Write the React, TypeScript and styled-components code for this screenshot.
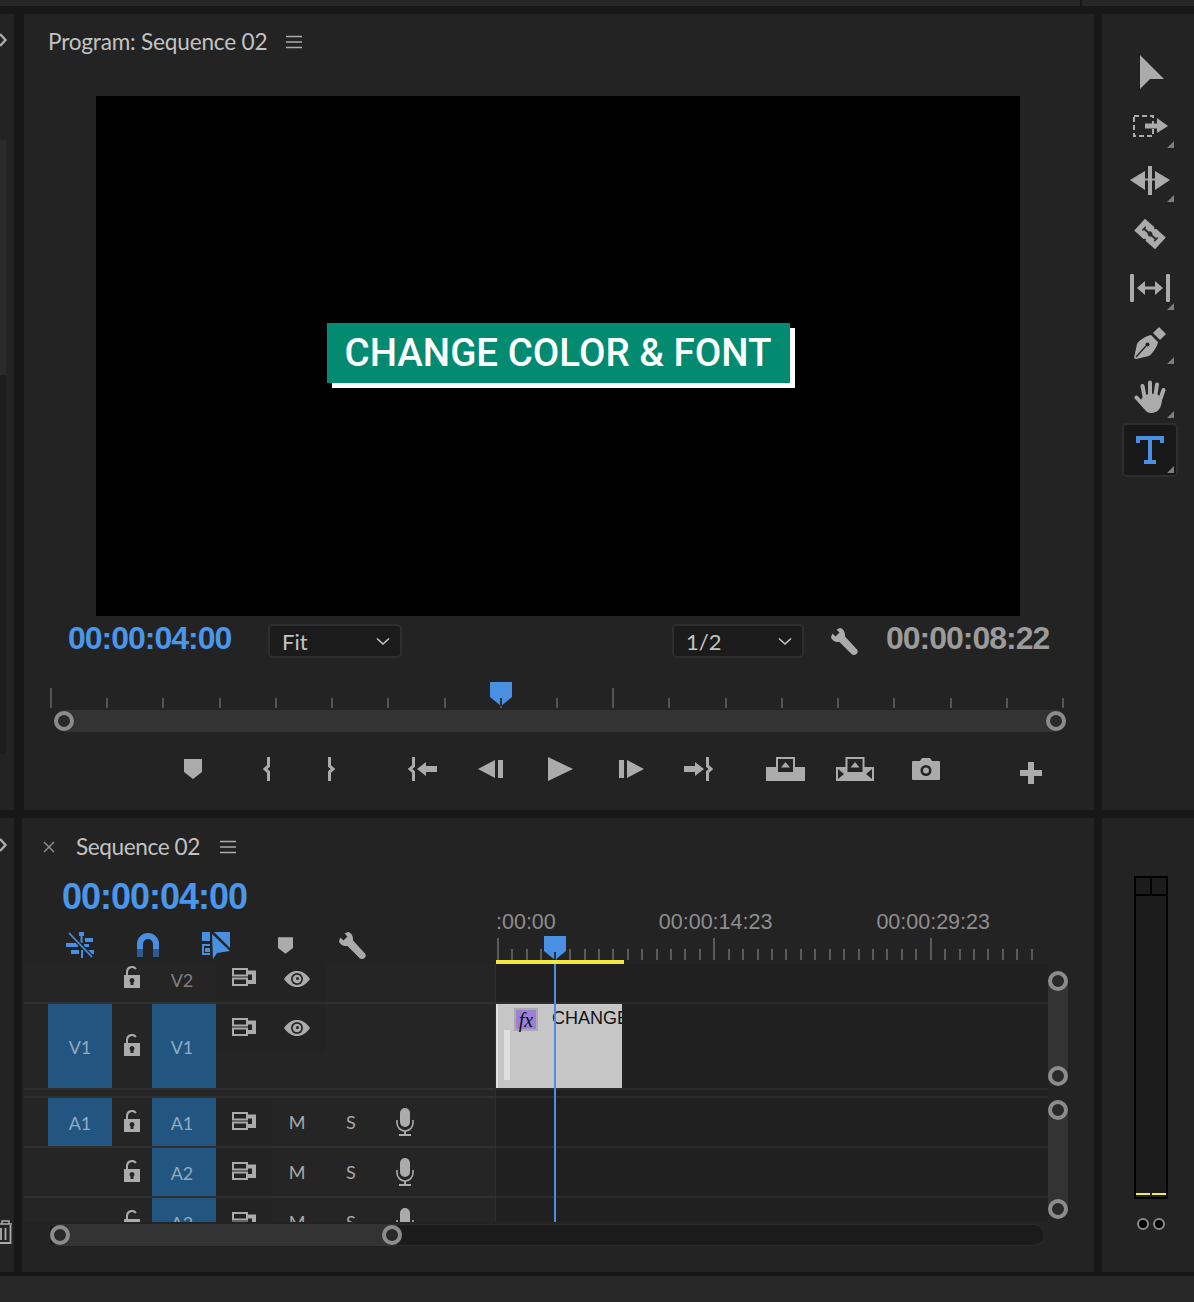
import styled, { createGlobalStyle } from 'styled-components'

const GRAY = '#ababab'
const BLUE = '#4a90e2'
const TIME_BLUE = '#4a96ea'
const PANEL = '#232323'

const GlobalStyle = createGlobalStyle`
  html, body {
    margin: 0;
    padding: 0;
    background: #171717;
  }
  * {
    box-sizing: border-box;
  }
  svg {
    display: block;
    flex-shrink: 0;
  }
`

const Page = styled.div`
  width: 1194px;
  height: 1302px;
  overflow: hidden;
  display: flex;
  flex-direction: column;
  background: #171717;
  font-family: Lato, 'Liberation Sans', sans-serif;
`

const TopBar = styled.div`
  height: 6px;
  display: flex;
  gap: 2px;
  flex-shrink: 0;
`

const TopBarPart = styled.div<{ $w: number }>`
  width: ${p => p.$w}px;
  background: #262626;
`

const PanelRow = styled.div<{ $h: number; $top: number }>`
  display: flex;
  height: ${p => p.$h}px;
  margin-top: ${p => p.$top}px;
  flex-shrink: 0;
`

const Sliver = styled.div`
  width: 14px;
  background: ${PANEL};
  display: flex;
  flex-direction: column;
  overflow: hidden;
`

const SliverChevron = styled.div<{ $top: number }>`
  margin-top: ${p => p.$top}px;
`

const SliverStrip = styled.div<{ $h: number; $bg: string; $top?: number }>`
  width: 6px;
  height: ${p => p.$h}px;
  margin-top: ${p => p.$top ?? 0}px;
  background: ${p => p.$bg};
`

const SliverTrash = styled.div`
  margin-top: auto;
  margin-bottom: 28px;
`

const Monitor = styled.section`
  width: 1070px;
  margin-left: 10px;
  background: ${PANEL};
  display: flex;
  flex-direction: column;
`

const PanelHeader = styled.header<{ $h: number; $left: number }>`
  height: ${p => p.$h}px;
  padding-left: ${p => p.$left}px;
  display: flex;
  align-items: center;
  flex-shrink: 0;
`

const PanelTitle = styled.h2<{ $gap: number; $track: number }>`
  margin: -2px ${p => p.$gap}px 0 0;
  font-size: 22.6px;
  font-weight: 400;
  letter-spacing: ${p => p.$track}px;
  color: #c2c2c2;
`

const Video = styled.div`
  width: 924px;
  height: 520px;
  margin: 26px 0 0 72px;
  background: #000;
  display: flex;
  align-items: center;
  justify-content: center;
  flex-shrink: 0;
`

const Caption = styled.div`
  width: 463px;
  height: 60px;
  margin-bottom: 6px;
  background: #038b71;
  box-shadow: 5px 5px 0 #fff;
  color: #fff;
  font-family: Roboto, sans-serif;
  font-size: 38.5px;
  font-weight: 500;
  line-height: 60px;
  text-align: center;
  white-space: nowrap;
`

const ControlRow = styled.div`
  height: 34px;
  margin-top: 8px;
  padding-left: 44px;
  display: flex;
  align-items: center;
  flex-shrink: 0;
`

const Timecode = styled.div<{ $size: number; $color: string; $w?: number; $left?: number }>`
  width: ${p => (p.$w ? `${p.$w}px` : 'auto')};
  margin-left: ${p => p.$left ?? 0}px;
  font-family: 'Liberation Sans', Arial, sans-serif;
  font-size: ${p => p.$size}px;
  font-weight: 700;
  line-height: ${p => p.$size}px;
  letter-spacing: -1px;
  color: ${p => p.$color};
  white-space: nowrap;
  position: relative;
  top: -3px;
`

const Dropdown = styled.div<{ $left?: number; $w: number }>`
  width: ${p => p.$w}px;
  height: 34px;
  margin-left: ${p => p.$left ?? 0}px;
  padding: 0 10px 0 12px;
  display: flex;
  align-items: center;
  justify-content: space-between;
  background: #1b1b1b;
  border: 2px solid #2e2e2e;
  border-radius: 5px;
  color: #c4c4c4;
  font-size: 22px;
`

const WrenchSlot = styled.div`
  margin-left: 26px;
`

const Ruler = styled.div`
  position: relative;
  width: 1014px;
  height: 24px;
  margin: 26px 0 0 26px;
  display: flex;
  justify-content: space-between;
  align-items: flex-end;
  flex-shrink: 0;
`

const Tick = styled.span<{ $tall: boolean; $h: number; $color: string }>`
  width: 2px;
  height: ${p => (p.$tall ? p.$h * 2 : p.$h)}px;
  background: ${p => p.$color};
`

const PlayheadMark = styled.div<{ $left: number; $top: number }>`
  position: absolute;
  left: ${p => p.$left}px;
  top: ${p => p.$top}px;
`

const Slider = styled.div`
  width: 1012px;
  height: 22px;
  margin: 2px 0 0 30px;
  border-radius: 11px;
  background: #333;
  display: flex;
  justify-content: space-between;
  align-items: center;
  flex-shrink: 0;
`

const Handle = styled.span`
  width: 20px;
  height: 20px;
  border-radius: 50%;
  border: 4px solid #8c8c8c;
  background: #2a2a2a;
  flex-shrink: 0;
`

const Transport = styled.div`
  height: 26px;
  margin-top: 24px;
  padding-left: 160px;
  display: flex;
  align-items: center;
`

const TransportButton = styled.button<{ $left?: number; $down?: number }>`
  margin: ${p => p.$down ?? 0}px 0 0 ${p => p.$left ?? 0}px;
  padding: 0;
  border: 0;
  background: none;
  display: flex;
`

const ToolsPanel = styled.aside`
  width: 92px;
  margin-left: 8px;
  padding: 31px 0 0 20px;
  background: ${PANEL};
  display: flex;
  flex-direction: column;
`

const ToolSlot = styled.div<{ $active?: boolean }>`
  position: relative;
  width: 56px;
  height: 54px;
  display: flex;
  align-items: center;
  justify-content: center;
  border-radius: 5px;
  background: ${p => (p.$active ? '#181818' : 'transparent')};
  border: ${p => (p.$active ? '2px solid #2e2e2e' : '0')};
`

const Corner = styled.span<{ $active?: boolean }>`
  position: absolute;
  right: ${p => (p.$active ? 2 : 4)}px;
  bottom: ${p => (p.$active ? 2 : 5)}px;
  width: 7px;
  height: 7px;
  background: #7d7d7d;
  clip-path: polygon(100% 0, 100% 100%, 0 100%);
`

const Timeline = styled.section`
  width: 1072px;
  margin-left: 8px;
  background: ${PANEL};
  display: flex;
  flex-direction: column;
`

const CloseIcon = styled.div`
  margin-right: 21px;
`

const TimelineHead = styled.div`
  height: 88px;
  padding-left: 2px;
  display: flex;
  flex-shrink: 0;
`

const HeadLeft = styled.div`
  width: 472px;
  padding: 6px 0 0 38px;
`

const ToolRow = styled.div`
  height: 26px;
  margin-top: 14px;
  padding-left: 4px;
  display: flex;
  align-items: center;
`

const ToolIcon = styled.div<{ $left?: number }>`
  margin-left: ${p => p.$left ?? 0}px;
`

const HeadRight = styled.div`
  position: relative;
  width: 552px;
  display: flex;
  flex-direction: column;
  justify-content: flex-end;
  overflow: hidden;
`

const TimeLabels = styled.div`
  height: 24px;
  padding-bottom: 3px;
  display: flex;
  align-items: center;
  color: #8e8e8e;
  font-family: 'Liberation Sans', Arial, sans-serif;
  font-size: 21.5px;
  line-height: 21px;
  white-space: nowrap;
`

const TimeLabel = styled.span<{ $left: number }>`
  margin-left: ${p => p.$left}px;
`

const TimeRuler = styled.div`
  width: 536px;
  height: 22px;
  margin: 2px 0 0 1px;
  display: flex;
  justify-content: space-between;
  align-items: flex-end;
`

const WorkArea = styled.div`
  width: 128px;
  height: 4px;
  background: #f1ea3d;
`

const TimelineBody = styled.div`
  height: 258px;
  padding-left: 2px;
  display: flex;
  overflow: hidden;
  flex-shrink: 0;
`

const Headers = styled.div`
  width: 472px;
  background: #252525;
  border-right: 1px solid #2f2f2f;
  flex-shrink: 0;
`

const TrackRow = styled.div<{ $h: number }>`
  height: ${p => p.$h}px;
  display: grid;
  grid-template-columns: 24px 64px 40px 64px 1fr;
  grid-template-rows: 1fr;
  border-bottom: 2px solid #2f2f2f;
`

const Spacer = styled.div`
  height: 8px;
  border-bottom: 2px solid #2f2f2f;
`

const Patch = styled.div<{ $on?: boolean; $col: number; $up?: number }>`
  grid-column: ${p => p.$col};
  grid-row: 1;
  padding-top: 2px;
  padding-right: ${p => (p.$col === 4 ? 4 : 0)}px;
  padding-bottom: ${p => p.$up ?? 0}px;
  display: flex;
  align-items: center;
  justify-content: center;
  background: ${p => (p.$on ? '#22557f' : 'transparent')};
  color: ${p => (p.$on ? '#8fabc4' : '#808080')};
  font-size: 18px;
`

const LockCell = styled.div<{ $up: number }>`
  grid-column: 3;
  grid-row: 1;
  display: flex;
  align-items: center;
  justify-content: center;
  padding-bottom: ${p => p.$up}px;
`

const Controls = styled.div`
  grid-column: 5;
  grid-row: 1;
  display: flex;
  align-items: flex-start;
  min-height: 0;
`

const ControlGroup = styled.div<{ $h?: number; $w: number }>`
  width: ${p => p.$w}px;
  height: ${p => (p.$h ? `${p.$h}px` : '100%')};
  display: flex;
  background: #232323;
  flex-shrink: 0;
`

const ControlCell = styled.div<{ $w: number; $up?: number }>`
  width: ${p => p.$w}px;
  height: 100%;
  padding-bottom: ${p => p.$up ?? 0}px;
  display: flex;
  align-items: center;
  justify-content: center;
  flex-shrink: 0;
  color: #a8a8a8;
  font-size: 18px;
`

const Lanes = styled.div`
  position: relative;
  width: 552px;
  background: #202020;
  flex-shrink: 0;
`

const Lane = styled.div<{ $h: number }>`
  height: ${p => p.$h}px;
  border-bottom: 2px solid #2c2c2c;
`

const Clip = styled.div`
  position: relative;
  width: 126px;
  height: 100%;
  padding: 4px 0 0 16px;
  display: flex;
  background: #c6c6c6;
  border-left: 2px solid #e2e2e2;
  color: #111;
  font-family: 'Liberation Sans', Arial, sans-serif;
  font-size: 18px;
  line-height: 20px;
  white-space: nowrap;
  overflow: hidden;
`

const FxBadge = styled.span`
  width: 24px;
  height: 23px;
  margin-right: 14px;
  display: flex;
  align-items: center;
  justify-content: center;
  background: #9d7fd6;
  border: 2px solid #aaa;
  color: #111;
  font-family: 'Liberation Serif', serif;
  font-size: 20px;
  font-style: italic;
  flex-shrink: 0;
`

const ClipBar = styled.span`
  position: absolute;
  left: 6px;
  top: 26px;
  width: 6px;
  height: 50px;
  background: #e0e0e0;
`

const PlayLine = styled.div`
  position: absolute;
  left: 58px;
  top: 0;
  bottom: 0;
  width: 2px;
  background: ${BLUE};
`

const VScroll = styled.div`
  width: 20px;
  display: flex;
  flex-direction: column;
  flex-shrink: 0;
`

const VThumb = styled.div<{ $h: number; $top: number }>`
  height: ${p => p.$h}px;
  margin-top: ${p => p.$top}px;
  border-radius: 10px;
  background: #333;
  display: flex;
  flex-direction: column;
  justify-content: space-between;
`

const HScroll = styled.div`
  width: 995px;
  height: 22px;
  margin: 2px 0 0 28px;
  display: flex;
  background: #1b1b1b;
  border: 1px solid #2b2b2b;
  border-left: 0;
  border-radius: 0 11px 11px 0;
  flex-shrink: 0;
`

const HThumb = styled.div`
  width: 352px;
  height: 22px;
  margin-top: -1px;
  border-radius: 11px;
  background: #333;
  display: flex;
  justify-content: space-between;
  align-items: center;
`

const MeterPanel = styled.aside`
  width: 92px;
  margin-left: 8px;
  padding: 58px 0 0 32px;
  background: ${PANEL};
`

const Meter = styled.div`
  width: 34px;
  height: 323px;
  display: flex;
  flex-direction: column;
  background: #1c1c1c;
  border: 2px solid #000;
`

const MeterHead = styled.div`
  height: 18px;
  display: flex;
  justify-content: center;
  border-bottom: 2px solid #000;
  flex-shrink: 0;
`

const MeterDivider = styled.span`
  width: 2px;
  background: #000;
`

const MeterFoot = styled.div`
  flex: 1;
  padding-bottom: 2px;
  display: flex;
  align-items: flex-end;
  gap: 2px;
`

const MeterPeak = styled.span`
  width: 14px;
  height: 2px;
  background: #f5ee3c;
`

const MeterDots = styled.div`
  margin: 19px 0 0 3px;
  display: flex;
  gap: 4px;
`

const MeterDot = styled.span`
  width: 12px;
  height: 12px;
  border-radius: 50%;
  background: #000;
  border: 2px solid #8a8a8a;
`

const StatusBar = styled.div`
  height: 26px;
  margin-top: 4px;
  background: #272727;
`

const Chevron = () => (
  <svg width="8" height="16" viewBox="0 0 8 16">
    <path d="M0 2L5.5 8L0 14" fill="none" stroke={GRAY} strokeWidth="2.4" />
  </svg>
)

const Hamburger = () => (
  <svg width="16" height="14" viewBox="0 0 16 14">
    <path d="M0 1.5H16M0 7H16M0 12.5H16" stroke={GRAY} strokeWidth="1.6" />
  </svg>
)

const Caret = () => (
  <svg width="14" height="9" viewBox="0 0 14 9">
    <path d="M1 1.5L7 7L13 1.5" fill="none" stroke="#c4c4c4" strokeWidth="1.6" />
  </svg>
)

const Wrench = () => (
  <svg width="28" height="28" viewBox="0 0 28 28">
    <path
      d="M10 1L6.5 2.5L9.5 5.5L5.5 9.500L2.500 6.500L1 10C1.500 13 5 15.500 9.500 15L22 27.500C23.500 28.500 26 28 27 26.500C28 25.500 28 23.500 27 22.500L15 9.500C15.500 5 13 1.500 10 1Z"
      fill={GRAY}
    />
  </svg>
)

const Playhead = () => (
  <svg width="22" height="24" viewBox="0 0 22 24">
    <path d="M0 0H22V15L11 24L0 15Z" fill={BLUE} />
    <path d="M11 16V24" stroke="#111" strokeWidth="1.500" />
  </svg>
)

const Marker = ({ w = 18, h = 20 }: { w?: number; h?: number }) => (
  <svg width={w} height={h} viewBox="0 0 18 20">
    <path d="M0 0H18V13L9 20L0 13Z" fill={GRAY} />
  </svg>
)

const Brace = ({ flip }: { flip?: boolean }) => (
  <svg width="10" height="24" viewBox="0 0 10 24">
    <path
      d={flip ? 'M3.500 0V9L7 12L3.500 15V24' : 'M6.500 0V9L3 12L6.500 15V24'}
      fill="none"
      stroke={GRAY}
      strokeWidth="3"
    />
  </svg>
)

const GoIn = () => (
  <svg width="30" height="24" viewBox="0 0 30 24">
    <path d="M6.500 0V9L3 12L6.500 15V24" fill="none" stroke={GRAY} strokeWidth="3" />
    <path d="M10 12L19 5V9H30V15H19V19Z" fill={GRAY} />
  </svg>
)

const GoOut = () => (
  <svg width="30" height="24" viewBox="0 0 30 24">
    <path d="M23.500 0V9L27 12L23.500 15V24" fill="none" stroke={GRAY} strokeWidth="3" />
    <path d="M20 12L11 5V9H0V15H11V19Z" fill={GRAY} />
  </svg>
)

const StepBack = () => (
  <svg width="25" height="20" viewBox="0 0 25 20">
    <path d="M0 10L17 1V19Z" fill={GRAY} />
    <rect x="20" y="1" width="5" height="18" fill={GRAY} />
  </svg>
)

const StepForward = () => (
  <svg width="25" height="20" viewBox="0 0 25 20">
    <rect x="0" y="1" width="5" height="18" fill={GRAY} />
    <path d="M8 1L25 10L8 19Z" fill={GRAY} />
  </svg>
)

const Play = () => (
  <svg width="25" height="24" viewBox="0 0 25 24">
    <path d="M0 0L25 12L0 24Z" fill={GRAY} />
  </svg>
)

const Lift = () => (
  <svg width="39" height="24" viewBox="0 0 39 24">
    <path d="M0 10H10V16H29V10H39V24H0Z" fill={GRAY} />
    <rect x="11" y="1" width="17" height="15" fill="none" stroke={GRAY} strokeWidth="2" />
    <path d="M15 10.500L19.500 5L24 10.500Z" fill={GRAY} />
  </svg>
)

const Extract = () => (
  <svg width="38" height="24" viewBox="0 0 38 24">
    <path d="M0 10H10V16H28V10H38V24H0Z" fill={GRAY} />
    <rect x="10.500" y="1" width="17" height="15" fill="none" stroke={GRAY} strokeWidth="2" />
    <path d="M14.500 10.500L19 5L23.500 10.500Z" fill={GRAY} />
    <path d="M2 12L8 17L2 22Z" fill={PANEL} />
    <path d="M36 12L30 17L36 22Z" fill={PANEL} />
  </svg>
)

const Camera = () => (
  <svg width="28" height="24" viewBox="0 0 28 24">
    <path
      fillRule="evenodd"
      d="M1 4H8L10 1H18L20 4H27C27.500 4 28 4.500 28 5V22C28 22.500 27.500 23 27 23H1C0.500 23 0 22.500 0 22V5C0 4.500 0.500 4 1 4ZM14 8A5.500 5.500 0 1 0 14 19A5.500 5.500 0 1 0 14 8ZM14 10.500A3 3 0 1 1 14 16.500A3 3 0 1 1 14 10.500Z"
      fill={GRAY}
    />
  </svg>
)

const Plus = () => (
  <svg width="22" height="22" viewBox="0 0 22 22">
    <path d="M8 0H14V8H22V14H14V22H8V14H0V8H8Z" fill={GRAY} />
  </svg>
)

const SelectionArrow = () => (
  <svg width="30" height="36" viewBox="0 0 30 36">
    <path d="M5 1L29 25H15L5 35Z" fill={GRAY} />
  </svg>
)

const TrackSelect = () => (
  <svg width="35" height="22" viewBox="0 0 35 22">
    <rect x="1" y="1" width="19" height="20" fill="none" stroke={GRAY} strokeWidth="2" strokeDasharray="5 3" />
    <path d="M12 8.500H24V3L35 11L24 18V13.500H12Z" fill={GRAY} />
  </svg>
)

const RippleEdit = () => (
  <svg width="40" height="29" viewBox="0 0 40 29">
    <rect x="18" y="0" width="4" height="29" fill={GRAY} />
    <path d="M0 14L15 5V24Z" fill={GRAY} />
    <path d="M40 14L25 5V24Z" fill={GRAY} />
    <rect x="15" y="12.500" width="10" height="2" fill={GRAY} />
  </svg>
)

const Razor = () => (
  <svg width="34" height="34" viewBox="0 0 34 34">
    <g transform="rotate(42 17 17)">
      <path d="M3 9H15.500L17 10.500L18.500 9H31V25H18.500L17 23.500L15.500 25H3Z" fill={GRAY} />
      <path d="M9 17H25" fill="none" stroke="#2a2a2a" strokeWidth="2" />
      <circle cx="17" cy="17" r="2.500" fill="#2a2a2a" />
      <path d="M9 14.500V19.500M25 14.500V19.500" stroke="#2a2a2a" strokeWidth="1.500" />
    </g>
  </svg>
)

const Slip = () => (
  <svg width="40" height="28" viewBox="0 0 40 28">
    <rect x="0" y="0" width="4" height="28" rx="1" fill={GRAY} />
    <rect x="36" y="0" width="4" height="28" rx="1" fill={GRAY} />
    <path d="M7 14L15 7V12.500H25V7L33 14L25 21V15.500H15V21Z" fill={GRAY} />
  </svg>
)

const Pen = () => (
  <svg width="33" height="33" viewBox="0 0 33 33">
    <path d="M19 7L25 1L32 8L26 14Z" fill={GRAY} />
    <path d="M0 32L3 18C5 14 12 10 17 9L24 16C23 21 19 27 15 30L2 33Z" fill={GRAY} />
    <path d="M2 31L12 20" stroke={PANEL} strokeWidth="1.400" />
    <circle cx="13.500" cy="18.500" r="2" fill={PANEL} />
  </svg>
)

const Hand = () => (
  <svg width="32" height="33" viewBox="0 0 32 33">
    <path d="M7 20C10 12 24 12 28 18C28 28 24 33 17 33C13 33 9 30 7 20Z" fill={GRAY} />
    <path
      d="M11 19L8.500 6M16 18V2.500M21 18L23 4.500M26 20L29.500 10M11 27L2.500 17.500"
      fill="none"
      stroke={GRAY}
      strokeWidth="4"
      strokeLinecap="round"
    />
  </svg>
)

const TypeTool = () => (
  <svg width="28" height="28" viewBox="0 0 28 28">
    <path d="M0 0H28V7H24V4H16V24H20V28H8V24H12V4H4V7H0Z" fill={BLUE} />
  </svg>
)

const NestIcon = () => (
  <svg width="28" height="26" viewBox="0 0 28 26">
    <g fill={BLUE}>
      <rect x="13" y="0" width="5" height="4" />
      <rect x="14.500" y="4" width="2" height="7" />
      <rect x="19" y="6" width="8" height="4" />
      <rect x="0" y="11" width="12" height="4" />
      <rect x="18" y="12" width="5" height="3" />
      <rect x="5" y="18" width="8" height="4" />
      <rect x="15" y="18" width="2" height="8" />
      <rect x="21" y="18" width="7" height="4" />
    </g>
    <path d="M3 1L26 25" stroke={PANEL} strokeWidth="4" />
    <path d="M3 1L26 25" stroke={BLUE} strokeWidth="1.800" />
  </svg>
)

const SnapIcon = () => (
  <svg width="22" height="24" viewBox="0 0 22 24">
    <path d="M3 16V11A8 8 0 0 1 19 11V16" fill="none" stroke={BLUE} strokeWidth="6" />
    <path d="M3 16V24M19 16V24" fill="none" stroke="#2f5b90" strokeWidth="6" />
  </svg>
)

const LinkedIcon = () => (
  <svg width="29" height="27" viewBox="0 0 29 27">
    <rect x="0" y="0" width="8" height="9" fill={BLUE} />
    <path d="M8 13H1V22H8M8 17H4V19H8" fill="none" stroke={BLUE} strokeWidth="2" />
    <path d="M12 0H28V16Z" fill={BLUE} />
    <path d="M10 2L28 19L15 21L11 27Z" fill={BLUE} />
  </svg>
)

const Lock = () => (
  <svg width="16" height="22" viewBox="0 0 16 22">
    <path d="M3 10V6A5 5 0 0 1 12 3" fill="none" stroke={GRAY} strokeWidth="2" />
    <path
      fillRule="evenodd"
      d="M0 9H16V22H0ZM8 12A2.500 2.500 0 0 0 6.500 16.500V19H9.500V16.500A2.500 2.500 0 0 0 8 12Z"
      fill={GRAY}
    />
  </svg>
)

const SyncLock = () => (
  <svg width="24" height="18" viewBox="0 0 24 18">
    <rect x="1" y="1" width="14" height="6.500" fill="none" stroke={GRAY} strokeWidth="2" />
    <rect x="1" y="10.500" width="14" height="6.500" fill="none" stroke={GRAY} strokeWidth="2" />
    <path d="M16 2.500H24V16H16V12H20V6.500H16Z" fill={GRAY} />
  </svg>
)

const Eye = () => (
  <svg width="26" height="16" viewBox="0 0 26 16">
    <path d="M0 8C4 2.500 8 0 13 0C18 0 22 2.500 26 8C22 13.500 18 16 13 16C8 16 4 13.500 0 8Z" fill={GRAY} />
    <circle cx="13" cy="8" r="6" fill="#232323" />
    <circle cx="13" cy="8" r="4.300" fill={GRAY} />
    <circle cx="13.500" cy="7.500" r="1.500" fill="#232323" />
  </svg>
)

const Mic = () => (
  <svg width="18" height="28" viewBox="0 0 18 28">
    <rect x="4" y="0" width="10" height="19" rx="5" fill={GRAY} />
    <path d="M1 12V15A8 8 0 0 0 17 15V12" fill="none" stroke={GRAY} strokeWidth="1.600" />
    <path d="M9 23V27M3 27H15" stroke={GRAY} strokeWidth="2" />
  </svg>
)

const CloseX = () => (
  <svg width="12" height="12" viewBox="0 0 12 12">
    <path d="M1 1L11 11M11 1L1 11" stroke="#8c8c8c" strokeWidth="1.500" />
  </svg>
)

const Trash = () => (
  <svg width="12" height="24" viewBox="0 0 12 24">
    <path d="M-6 4H12M2 4V1H9V4" fill="none" stroke={GRAY} strokeWidth="1.500" />
    <path d="M10.500 5V23H-4M1 8V20M5.500 8V20" fill="none" stroke={GRAY} strokeWidth="1.800" />
  </svg>
)

const MONITOR_TICKS = Array.from({ length: 19 }, (_, i) => i)
const TIME_TICKS = Array.from({ length: 38 }, (_, i) => i)

const AudioControls = () => (
  <Controls>
    <ControlGroup $w={56}>
      <ControlCell $w={56} $up={2}>
        <SyncLock />
      </ControlCell>
    </ControlGroup>
    <ControlCell $w={50}>M</ControlCell>
    <ControlCell $w={58}>S</ControlCell>
    <ControlCell $w={50}>
      <Mic />
    </ControlCell>
  </Controls>
)

const VideoControls = ({ h, syncUp, eyeUp }: { h: number; syncUp: number; eyeUp: number }) => (
  <Controls>
    <ControlGroup $w={110} $h={h}>
      <ControlCell $w={56} $up={syncUp}>
        <SyncLock />
      </ControlCell>
      <ControlCell $w={50} $up={eyeUp}>
        <Eye />
      </ControlCell>
    </ControlGroup>
  </Controls>
)

const App = () => {
  return (
    <Page>
      <GlobalStyle />
      <TopBar>
        <TopBarPart $w={1080} />
        <TopBarPart $w={112} />
      </TopBar>

      <PanelRow $h={796} $top={8}>
        <Sliver>
          <SliverChevron $top={18}>
            <Chevron />
          </SliverChevron>
          <SliverStrip $h={235} $bg="#2b2b2b" $top={92} />
          <SliverStrip $h={379} $bg="#1d1d1d" />
        </Sliver>

        <Monitor>
          <PanelHeader $h={56} $left={24}>
            <PanelTitle $gap={19} $track={-0.2}>
              Program: Sequence 02
            </PanelTitle>
            <Hamburger />
          </PanelHeader>

          <Video>
            <Caption>CHANGE COLOR &amp; FONT</Caption>
          </Video>

          <ControlRow>
            <Timecode $size={32} $color={TIME_BLUE} $w={200}>
              00:00:04:00
            </Timecode>
            <Dropdown $w={134}>
              Fit
              <Caret />
            </Dropdown>
            <Dropdown $w={132} $left={270}>
              1/2
              <Caret />
            </Dropdown>
            <WrenchSlot>
              <Wrench />
            </WrenchSlot>
            <Timecode $size={32} $color="#9b9b9b" $left={28}>
              00:00:08:22
            </Timecode>
          </ControlRow>

          <Ruler>
            {MONITOR_TICKS.map(i => (
              <Tick key={i} $tall={i === 0 || i === 10} $h={10} $color="#555" />
            ))}
            <PlayheadMark $left={440} $top={-2}>
              <Playhead />
            </PlayheadMark>
          </Ruler>

          <Slider>
            <Handle />
            <Handle />
          </Slider>

          <Transport>
            <TransportButton>
              <Marker />
            </TransportButton>
            <TransportButton $left={60}>
              <Brace />
            </TransportButton>
            <TransportButton $left={54}>
              <Brace flip />
            </TransportButton>
            <TransportButton $left={71}>
              <GoIn />
            </TransportButton>
            <TransportButton $left={41}>
              <StepBack />
            </TransportButton>
            <TransportButton $left={45}>
              <Play />
            </TransportButton>
            <TransportButton $left={46}>
              <StepForward />
            </TransportButton>
            <TransportButton $left={40}>
              <GoOut />
            </TransportButton>
            <TransportButton $left={52}>
              <Lift />
            </TransportButton>
            <TransportButton $left={31}>
              <Extract />
            </TransportButton>
            <TransportButton $left={38}>
              <Camera />
            </TransportButton>
            <TransportButton $left={80} $down={7}>
              <Plus />
            </TransportButton>
          </Transport>
        </Monitor>

        <ToolsPanel>
          <ToolSlot>
            <SelectionArrow />
          </ToolSlot>
          <ToolSlot>
            <TrackSelect />
            <Corner />
          </ToolSlot>
          <ToolSlot>
            <RippleEdit />
            <Corner />
          </ToolSlot>
          <ToolSlot>
            <Razor />
          </ToolSlot>
          <ToolSlot>
            <Slip />
            <Corner />
          </ToolSlot>
          <ToolSlot>
            <Pen />
            <Corner />
          </ToolSlot>
          <ToolSlot>
            <Hand />
            <Corner />
          </ToolSlot>
          <ToolSlot $active>
            <TypeTool />
            <Corner $active />
          </ToolSlot>
        </ToolsPanel>
      </PanelRow>

      <PanelRow $h={454} $top={8}>
        <Sliver>
          <SliverChevron $top={19}>
            <Chevron />
          </SliverChevron>
          <SliverTrash>
            <Trash />
          </SliverTrash>
        </Sliver>

        <Timeline>
          <PanelHeader $h={58} $left={21}>
            <CloseIcon>
              <CloseX />
            </CloseIcon>
            <PanelTitle $gap={20} $track={-0.4}>
              Sequence 02
            </PanelTitle>
            <Hamburger />
          </PanelHeader>

          <TimelineHead>
            <HeadLeft>
              <Timecode $size={36} $color={TIME_BLUE}>
                00:00:04:00
              </Timecode>
              <ToolRow>
                <ToolIcon>
                  <NestIcon />
                </ToolIcon>
                <ToolIcon $left={43}>
                  <SnapIcon />
                </ToolIcon>
                <ToolIcon $left={43}>
                  <LinkedIcon />
                </ToolIcon>
                <ToolIcon $left={47}>
                  <Marker w={15} h={17} />
                </ToolIcon>
                <ToolIcon $left={45}>
                  <Wrench />
                </ToolIcon>
              </ToolRow>
            </HeadLeft>

            <HeadRight>
              <TimeLabels>
                <TimeLabel $left={0}>:00:00</TimeLabel>
                <TimeLabel $left={103}>00:00:14:23</TimeLabel>
                <TimeLabel $left={104}>00:00:29:23</TimeLabel>
              </TimeLabels>
              <TimeRuler>
                {TIME_TICKS.map(i => (
                  <Tick key={i} $tall={i % 15 === 0} $h={11} $color="#5a5a5a" />
                ))}
              </TimeRuler>
              <WorkArea />
              <PlayheadMark $left={48} $top={60}>
                <Playhead />
              </PlayheadMark>
            </HeadRight>
          </TimelineHead>

          <TimelineBody>
            <Headers>
              <TrackRow $h={40}>
                <LockCell $up={12}>
                  <Lock />
                </LockCell>
                <Patch $col={4} $up={8}>
                  V2
                </Patch>
                <VideoControls h={38} syncUp={12} eyeUp={8} />
              </TrackRow>
              <TrackRow $h={86}>
                <Patch $on $col={2}>
                  V1
                </Patch>
                <LockCell $up={2}>
                  <Lock />
                </LockCell>
                <Patch $on $col={4}>
                  V1
                </Patch>
                <VideoControls h={48} syncUp={2} eyeUp={0} />
              </TrackRow>
              <Spacer />
              <TrackRow $h={50}>
                <Patch $on $col={2}>
                  A1
                </Patch>
                <LockCell $up={2}>
                  <Lock />
                </LockCell>
                <Patch $on $col={4}>
                  A1
                </Patch>
                <AudioControls />
              </TrackRow>
              <TrackRow $h={50}>
                <LockCell $up={2}>
                  <Lock />
                </LockCell>
                <Patch $on $col={4}>
                  A2
                </Patch>
                <AudioControls />
              </TrackRow>
              <TrackRow $h={50}>
                <LockCell $up={2}>
                  <Lock />
                </LockCell>
                <Patch $on $col={4}>
                  A3
                </Patch>
                <AudioControls />
              </TrackRow>
            </Headers>

            <Lanes>
              <Lane $h={40} />
              <Lane $h={86}>
                <Clip>
                  <FxBadge>fx</FxBadge>
                  CHANGE
                  <ClipBar />
                </Clip>
              </Lane>
              <Lane $h={8} />
              <Lane $h={50} />
              <Lane $h={50} />
              <PlayLine />
            </Lanes>

            <VScroll>
              <VThumb $h={115} $top={7}>
                <Handle />
                <Handle />
              </VThumb>
              <VThumb $h={119} $top={14}>
                <Handle />
                <Handle />
              </VThumb>
            </VScroll>
          </TimelineBody>

          <HScroll>
            <HThumb>
              <Handle />
              <Handle />
            </HThumb>
          </HScroll>
        </Timeline>

        <MeterPanel>
          <Meter>
            <MeterHead>
              <MeterDivider />
            </MeterHead>
            <MeterFoot>
              <MeterPeak />
              <MeterPeak />
            </MeterFoot>
          </Meter>
          <MeterDots>
            <MeterDot />
            <MeterDot />
          </MeterDots>
        </MeterPanel>
      </PanelRow>

      <StatusBar />
    </Page>
  )
}

export default App
